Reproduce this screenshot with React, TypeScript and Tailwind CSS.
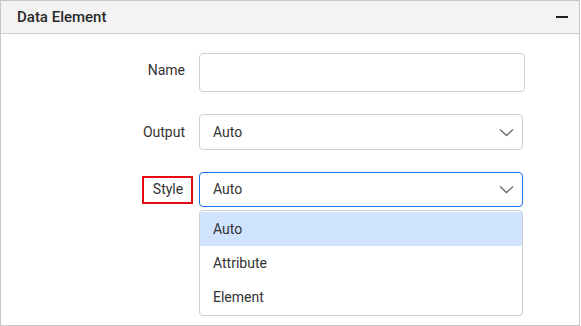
import React from 'react';

const Chevron = () => (
  <svg width="15" height="9" viewBox="0 0 15 9" fill="none" className="shrink-0">
    <path d="M1 1.5 L7.5 7.5 L14 1.5" stroke="#6b6b6b" strokeWidth="1.3" />
  </svg>
);

const options = ['Auto', 'Attribute', 'Element'];

export default function App() {
  return (
    <div
      className="w-[581px] h-[326px] bg-white text-[#333] text-[14px]"
      style={{ fontFamily: 'Roboto, "Liberation Sans", sans-serif' }}
    >
      <div className="w-[580px] h-[326px] border border-[#c6c6c6] flex flex-col">
        {/* Header */}
        <div className="h-[33px] shrink-0 bg-[#f3f3f3] border-b border-[#cfcfcf] flex items-center justify-between pl-[16px] pr-[11px]">
          <span className="font-medium text-[15px] text-[#2a2a2a]">Data Element</span>
          <span className="w-[12px] h-[1.5px] bg-[#222]"></span>
        </div>

        {/* Form */}
        <div className="pt-[19px] flex flex-col">
          <div className="flex items-center">
            <div className="w-[184px] text-right -mt-[4px]">Name</div>
            <input className="ml-[14px] w-[326px] h-[39px] border border-[#cfcfcf] rounded-[4px] outline-none" />
          </div>

          <div className="flex items-center mt-[22px]">
            <div className="w-[184px] text-right">Output</div>
            <div className="ml-[14px] w-[324px] h-[36px] border border-[#cfcfcf] rounded-[4px] flex items-center justify-between pl-[13px] pr-[8px]">
              <span>Auto</span>
              <Chevron />
            </div>
          </div>

          <div className="flex items-center mt-[22px]">
            <div className="w-[184px] flex justify-end">
              <span className="w-[51px] h-[28px] border-2 border-[#e50914] flex items-center justify-center mr-[-8px] pl-[1px]">
                Style
              </span>
            </div>
            <div className="ml-[14px] relative">
              <div className="w-[324px] h-[35px] border border-[#1a73e8] rounded-[4px] flex items-center justify-between pl-[13px] pr-[8px]">
                <span>Auto</span>
                <Chevron />
              </div>
              <div className="absolute left-0 top-[38px] w-[324px] border border-[#cfcfcf] rounded-[4px] bg-white overflow-hidden py-px">
                {options.map((o, i) => (
                  <div
                    key={o}
                    className={
                      'h-[34px] flex items-center pl-[13px] ' + (i === 0 ? 'bg-[#cfe2fe]' : '')
                    }
                  >
                    {o}
                  </div>
                ))}
              </div>
            </div>
          </div>
        </div>
      </div>
    </div>
  );
}
